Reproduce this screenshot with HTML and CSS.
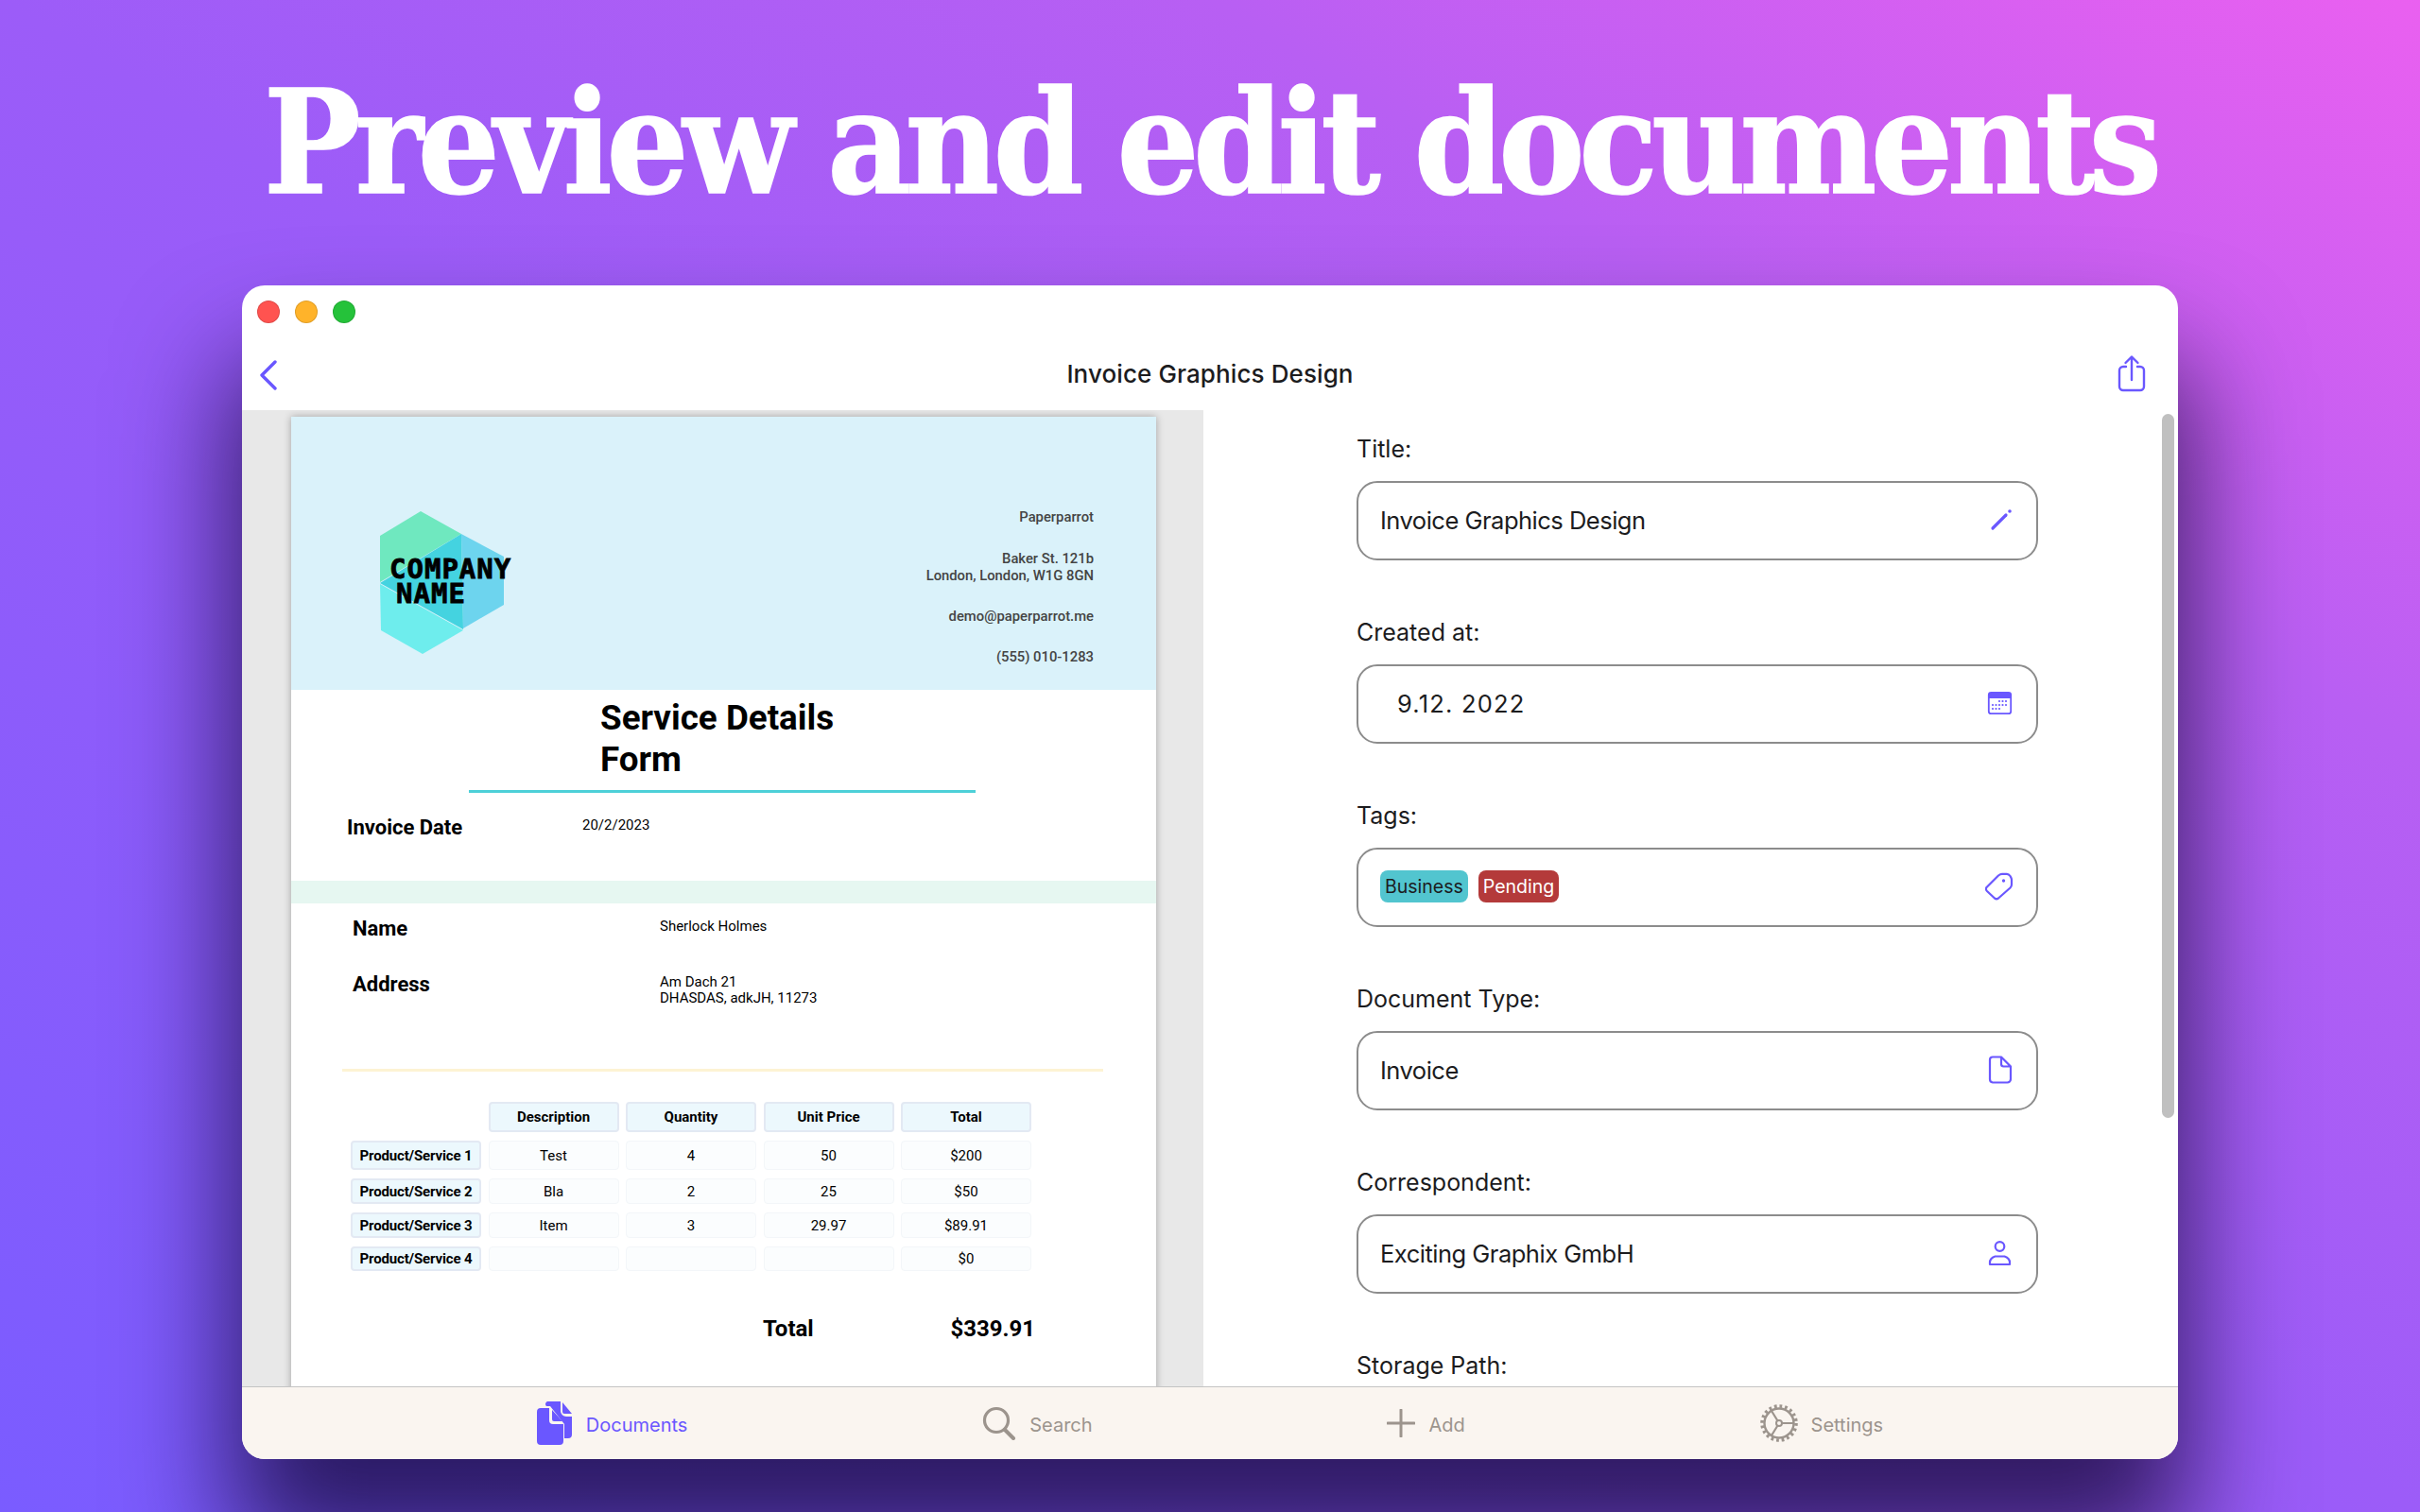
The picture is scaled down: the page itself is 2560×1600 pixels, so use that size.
FILE: index.html
```html
<!DOCTYPE html>
<html lang="en">
<head>
  <meta charset="UTF-8">
  <title>Preview and edit documents</title>
  <link rel="stylesheet" href="styles.css">
</head>
<body>
  <h1 class="headline">Preview and edit documents</h1>

  <div class="window">
    <!-- Title bar -->
    <div class="titlebar">
      <div class="lights">
        <span class="light red"></span>
        <span class="light orange"></span>
        <span class="light green"></span>
      </div>
      <div class="navbar">
        <svg class="back" width="24" height="32" viewBox="0 0 24 32"><path d="M19 2 5 16l14 14" fill="none" stroke="#6a57ff" stroke-width="3.4" stroke-linecap="round" stroke-linejoin="round"/></svg>
        <span class="nav-title">Invoice Graphics Design</span>
        <svg class="share" width="32" height="40" viewBox="0 0 32 40"><path d="M10 13H7a4 4 0 0 0-4 4v17a4 4 0 0 0 4 4h18a4 4 0 0 0 4-4V17a4 4 0 0 0-4-4h-3M16 27V3M9.500 9 16 2.500 22.500 9" fill="none" stroke="#6a57ff" stroke-width="2.400" stroke-linecap="round" stroke-linejoin="round"/></svg>
      </div>
    </div>

    <div class="content">
      <!-- Document preview -->
      <div class="preview">
        <div class="paper">
          <div class="paper-head">
            <div class="logo">
              <svg class="logo-mark" width="131" height="151" viewBox="0 0 131 151">
                <polygon points="43,0 86,24 0,75 0,26" fill="#6fe8bf"/>
                <polygon points="86,24 131,48 131,99 88,124" fill="#6dd4ee"/>
                <polygon points="0,77 88,126 45,151 1,126" fill="#6eeded"/>
                <polygon points="86,24 0,76 88,125" fill="#44d3e0"/>
              </svg>
              <div class="logo-text">COMPANY<br><span class="logo-name">NAME</span></div>
            </div>
            <div class="sender">
              <p>Paperparrot</p>
              <p>Baker St. 121b<br>London, London, W1G 8GN</p>
              <p>demo@paperparrot.me</p>
              <p>(555) 010-1283</p>
            </div>
          </div>

          <h2 class="form-title">Service Details<br>Form</h2>
          <div class="title-rule"></div>

          <div class="invoice-date">
            <span class="strong-label">Invoice Date</span>
            <span class="small-value">20/2/2023</span>
          </div>
          <div class="band"></div>

          <div class="person">
            <span class="strong-label">Name</span>
            <span class="small-value">Sherlock Holmes</span>
            <span class="strong-label">Address</span>
            <span class="small-value">Am Dach 21<br>DHASDAS, adkJH, 11273</span>
          </div>
          <div class="yellow-rule"></div>

          <div class="items">
            <span></span>
            <span class="cell head">Description</span>
            <span class="cell head">Quantity</span>
            <span class="cell head">Unit Price</span>
            <span class="cell head">Total</span>

            <span class="cell head row-head">Product/Service 1</span>
            <span class="cell">Test</span>
            <span class="cell">4</span>
            <span class="cell">50</span>
            <span class="cell">$200</span>

            <span class="cell head row-head">Product/Service 2</span>
            <span class="cell">Bla</span>
            <span class="cell">2</span>
            <span class="cell">25</span>
            <span class="cell">$50</span>

            <span class="cell head row-head">Product/Service 3</span>
            <span class="cell">Item</span>
            <span class="cell">3</span>
            <span class="cell">29.97</span>
            <span class="cell">$89.91</span>

            <span class="cell head row-head">Product/Service 4</span>
            <span class="cell"></span>
            <span class="cell"></span>
            <span class="cell"></span>
            <span class="cell">$0</span>
          </div>

          <div class="grand-total">
            <span>Total</span>
            <span>$339.91</span>
          </div>
        </div>
      </div>

      <!-- Edit form -->
      <div class="form-pane">
        <div class="group">
          <label>Title:</label>
          <div class="field">
            <span>Invoice Graphics Design</span>
            <svg width="32" height="32" viewBox="0 0 32 32"><path d="M8 25 22 11" stroke="#6a57ff" stroke-width="3.200" stroke-linecap="round"/><circle cx="26" cy="7" r="1.800" fill="#6a57ff"/></svg>
          </div>
        </div>
        <div class="group">
          <label>Created at:</label>
          <div class="field">
            <span class="date">9.12. 2022</span>
            <svg width="32" height="32" viewBox="0 0 32 32">
              <rect x="3.800" y="4.800" width="23.400" height="22.400" rx="2.500" fill="none" stroke="#6a57ff" stroke-width="1.800"/>
              <path d="M3 8a3 3 0 0 1 3-3h19a3 3 0 0 1 3 3v3H3z" fill="#6a57ff"/>
              <g fill="#6a57ff"><circle cx="15" cy="14" r="1.100"/><circle cx="18.500" cy="14" r="1.100"/><circle cx="22" cy="14" r="1.100"/><circle cx="8" cy="18" r="1.100"/><circle cx="11.500" cy="18" r="1.100"/><circle cx="15" cy="18" r="1.100"/><circle cx="18.500" cy="18" r="1.100"/><circle cx="22" cy="18" r="1.100"/><circle cx="8" cy="22" r="1.100"/><circle cx="11.500" cy="22" r="1.100"/><circle cx="15" cy="22" r="1.100"/></g>
            </svg>
          </div>
        </div>
        <div class="group">
          <label>Tags:</label>
          <div class="field">
            <div class="tags">
              <span class="tag business">Business</span>
              <span class="tag pending">Pending</span>
            </div>
            <svg width="32" height="32" viewBox="0 0 32 32"><path d="M1.500 17 14 4.500Q16 2.800 18 2.800H23Q25 2.800 26.500 5L27.500 7Q28 8 28 9V14Q28 16 26.500 17.500L14 28.500Q12 30 10 28.500L2 21Q0 19 1.500 17z" fill="none" stroke="#6a57ff" stroke-width="2.200" stroke-linejoin="round"/><circle cx="19.500" cy="10" r="1.700" fill="#6a57ff"/></svg>
          </div>
        </div>
        <div class="group">
          <label>Document Type:</label>
          <div class="field">
            <span>Invoice</span>
            <svg width="32" height="32" viewBox="0 0 32 32"><path d="M8 2.500h9l10 10V26a3.500 3.500 0 0 1-3.500 3.500h-15.500A3.500 3.500 0 0 1 5 26V5.500a3 3 0 0 1 3-3zM17 2.500V10a2.500 2.500 0 0 0 2.500 2.500H27" fill="none" stroke="#6a57ff" stroke-width="2.200" stroke-linejoin="round"/></svg>
          </div>
        </div>
        <div class="group">
          <label>Correspondent:</label>
          <div class="field">
            <span>Exciting Graphix GmbH</span>
            <svg width="32" height="32" viewBox="0 0 32 32"><circle cx="15.500" cy="9" r="4.800" fill="none" stroke="#6a57ff" stroke-width="2.200"/><path d="M5 28v-2a9 7 0 0 1 5.500-6.500h10A9 7 0 0 1 26 26v2z" fill="none" stroke="#6a57ff" stroke-width="2.200" stroke-linejoin="round"/></svg>
          </div>
        </div>
        <div class="group">
          <label>Storage Path:</label>
        </div>
        <div class="scrollbar"></div>
      </div>
    </div>

    <!-- Tab bar -->
    <div class="tabbar">
      <div class="tab active">
        <svg width="38" height="46" viewBox="0 0 38 46">
          <path d="M13 0h12v10a6 6 0 0 0 6 6h6v19a4 4 0 0 1-4 4h-4V24L14 5h-4a3 3 0 0 1 3-5z" fill="#6a57ff"/>
          <path d="M27 1l10 12h-8a2 2 0 0 1-2-2z" fill="#6a57ff"/>
          <path d="M4 7h9v13a4 4 0 0 0 4 4h11v18a4 4 0 0 1-4 4H4a4 4 0 0 1-4-4V11a4 4 0 0 1 4-4z" fill="#6a57ff"/>
          <path d="M16 9l11 12H18a2 2 0 0 1-2-2z" fill="#6a57ff"/>
        </svg>
        <span>Documents</span>
      </div>
      <div class="tab">
        <svg width="36" height="36" viewBox="0 0 36 36"><circle cx="15" cy="15" r="12.500" fill="none" stroke="#9c948d" stroke-width="3.200"/><path d="M24 25l9 9" stroke="#9c948d" stroke-width="4" stroke-linecap="round"/></svg>
        <span>Search</span>
      </div>
      <div class="tab">
        <svg width="30" height="30" viewBox="0 0 30 30"><path d="M15 1v28M1 15h28" stroke="#9c948d" stroke-width="3" stroke-linecap="round"/></svg>
        <span>Add</span>
      </div>
      <div class="tab">
        <svg width="40" height="40" viewBox="0 0 40 40">
          <circle cx="20" cy="20" r="15.500" fill="none" stroke="#9c948d" stroke-width="2.400"/>
          <circle cx="20" cy="20" r="18" fill="none" stroke="#9c948d" stroke-width="3.600" stroke-dasharray="2.800 2.850"/>
          <circle cx="20" cy="20" r="3" fill="none" stroke="#9c948d" stroke-width="2"/>
          <path d="M23 20h12M18.500 17.500 12 7M18.500 22.500 12 33" stroke="#9c948d" stroke-width="2.200"/>
        </svg>
        <span>Settings</span>
      </div>
    </div>
  </div>
</body>
</html>
```

FILE: styles.css
```css
/* Page */
* {
  box-sizing: border-box;
}

body {
  margin: 0;
  width: 2560px;
  height: 1600px;
  overflow: hidden;
  font-family: Inter, "Noto Sans", sans-serif;
  color: #1c1c1e;
  background: linear-gradient(to top right, #7a5cff 0%, #9c5cf8 50%, #b85ff3 75%, #ea60f0 100%);
}

.headline {
  margin: 0;
  height: 302px;
  padding-top: 66px;
  text-align: center;
  font-family: "DejaVu Serif Condensed", "DejaVu Serif", serif;
  font-size: 152px;
  line-height: 170px;
  font-weight: 700;
  letter-spacing: -6.200px;
  -webkit-text-stroke: 1.5px #fff;
  color: #fff;
  white-space: nowrap;
}

/* Window */
.window {
  width: 2048px;
  height: 1242px;
  margin-left: 256px;
  display: flex;
  flex-direction: column;
  background: #fff;
  border-radius: 24px;
  overflow: hidden;
  box-shadow: 0 90px 120px 10px rgba(10, 0, 40, 0.72);
}

.titlebar {
  height: 132px;
  padding: 16px 16px 0;
  flex: none;
}

.lights {
  display: flex;
  gap: 16px;
}

.light {
  width: 24px;
  height: 24px;
  border-radius: 50%;
  border: 1px solid rgba(0, 0, 0, 0.12);
}

.red { background: #ff5350; }
.orange { background: #ffb32a; }
.green { background: #25c23a; }

.navbar {
  display: grid;
  grid-template-columns: 1fr auto 1fr;
  align-items: center;
  margin-top: 29px;
  height: 48px;
}

.back {
  margin-top: 3px;
}

.share {
  justify-self: end;
  margin-right: 17px;
}

.nav-title {
  font-size: 26px;
  font-weight: 500;
  letter-spacing: 0.1px;
}

/* Preview */
.content {
  flex: 1;
  display: flex;
  min-height: 0;
}

.preview {
  width: 1017px;
  padding: 7px 0 0 52px;
  background: #e8e8e8;
  overflow: hidden;
  flex: none;
}

.paper {
  width: 915px;
  height: 1200px;
  background: #fff;
  box-shadow: 0 0 8px rgba(0, 0, 0, 0.3);
  font-family: Roboto, sans-serif;
  color: #000;
}

.paper-head {
  height: 289px;
  background: #daf2fa;
  display: flex;
  justify-content: space-between;
  padding: 97px 66px 0 94px;
}

.logo {
  position: relative;
  padding-top: 3px;
}

.logo-mark {
  display: block;
}

.logo-text {
  position: absolute;
  left: 10px;
  top: 51px;
  font-family: "DejaVu Sans Mono", monospace;
  font-size: 29px;
  line-height: 26px;
  font-weight: 700;
  letter-spacing: 1px;
  -webkit-text-stroke: 0.8px #000;
  white-space: nowrap;
}

.logo-name {
  margin-left: 7px;
}

.sender {
  text-align: right;
  font-size: 14.800px;
  font-weight: 500;
  line-height: 18px;
  color: #444;
}

.sender p {
  margin: 0 0 25px;
}

.sender p:first-child {
  margin-bottom: 26px;
}

.form-title {
  margin: 8px 0 0 327px;
  font-size: 36.800px;
  line-height: 44px;
  font-weight: 700;
}

.title-rule {
  width: 536px;
  height: 3px;
  margin: 10px 0 0 188px;
  background: #4dd0d8;
}

.strong-label {
  font-size: 22px;
  font-weight: 700;
}

.small-value {
  padding-top: 2px;
  font-size: 15px;
  line-height: 17px;
}

.invoice-date {
  display: grid;
  grid-template-columns: 249px 1fr;
  padding: 24px 0 0 59px;
  height: 93px;
}

.band {
  height: 24px;
  background: #e6f7f1;
}

.person {
  display: grid;
  grid-template-columns: 325px 1fr;
  grid-template-rows: 59px 102px;
  padding: 14px 0 0 65px;
}

.yellow-rule {
  width: 805px;
  height: 3px;
  margin: 0 0 0 54px;
  background: #fdf3d3;
}

/* Items table */
.items {
  display: grid;
  grid-template-columns: repeat(5, 138px);
  grid-template-rows: 32px 31px 27px 27px 26px;
  column-gap: 7.500px;
  row-gap: 9px;
  margin: 32px 0 0 63px;
  font-size: 15px;
}

.cell {
  display: flex;
  align-items: center;
  justify-content: center;
  background: #fbfdfe;
  border: 1px solid #f3f6f9;
  border-radius: 4px;
}

.cell.head {
  background: #ecf8fd;
  border: 2px solid #e3e9f3;
  font-weight: 700;
  white-space: nowrap;
}

.cell.row-head {
  letter-spacing: -0.150px;
}

.grand-total {
  display: flex;
  justify-content: space-between;
  width: 288px;
  margin: 47px 0 0 499px;
  font-size: 24px;
  font-weight: 700;
}

/* Form */
.form-pane {
  position: relative;
  flex: 1;
  padding: 20px 0 0 162px;
  overflow: hidden;
}

.group {
  width: 721px;
  height: 194px;
}

.group label {
  display: block;
  height: 41px;
  padding-top: 1px;
  margin-bottom: 14px;
  font-size: 25px;
  line-height: 40px;
}

.field {
  display: flex;
  align-items: center;
  justify-content: space-between;
  height: 84px;
  padding: 0 22px 2px 23px;
  border: 2px solid #8c8c8c;
  border-radius: 22px;
  font-size: 25.500px;
  letter-spacing: -0.500px;
}

.date {
  padding-left: 18px;
  letter-spacing: 1.200px;
}

.tags {
  display: flex;
  gap: 11px;
  letter-spacing: 0;
}

.tag {
  height: 34px;
  padding: 0 5px;
  border-radius: 8px;
  font-size: 19.500px;
  line-height: 34px;
}

.business { background: #52c5cf; }
.pending { background: #b43a3a; color: #fff; }

.scrollbar {
  position: absolute;
  top: 4px;
  right: 4px;
  width: 13px;
  height: 745px;
  border-radius: 7px;
  background: #c0c0c0;
}

/* Tab bar */
.tabbar {
  flex: none;
  height: 77px;
  display: flex;
  justify-content: space-evenly;
  align-items: center;
  background: #faf5f0;
  border-top: 1px solid #c4c4c4;
  color: #9c948d;
  font-size: 20px;
}

.tab {
  display: flex;
  align-items: center;
  gap: 14px;
}

.tab span {
  padding-top: 4px;
}

.tab.active {
  color: #6a57ff;
}
```
